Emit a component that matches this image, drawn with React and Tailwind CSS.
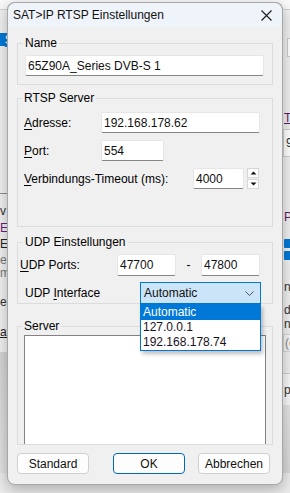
import React from 'react';

const Key = ({ children }) => <span className="underline underline-offset-[2px]">{children}</span>;

const Field = ({ value, className }) => (
    <div className={`h-[21px] bg-white border border-[#e6e6e6] border-b-[#868686] rounded-[2px] flex items-center pl-[2px] text-[#111] ${className}`}>
        {value}
    </div>
);

const Group = ({ title, className, children }) => (
    <fieldset className={`border border-[#dcdcdc] min-w-0 ${className}`}>
        <legend className="ml-[-2px] px-[2px] leading-[16px]">{title}</legend>
        {children}
    </fieldset>
);

const Spinner = () => (
    <div className="ml-[3px] flex flex-col gap-[1px] w-[12px]">
        <div className="h-[10px] bg-white border border-[#d6d6d6] flex items-center justify-center">
            <svg width="7" height="4" viewBox="0 0 7 4"><path d="M0.5 3.5 L3.5 0.5 L6.5 3.5 Z" fill="#111" /></svg>
        </div>
        <div className="h-[10px] bg-white border border-[#d6d6d6] flex items-center justify-center">
            <svg width="7" height="4" viewBox="0 0 7 4"><path d="M0.5 0.5 L3.5 3.5 L6.5 0.5 Z" fill="#111" /></svg>
        </div>
    </div>
);

// bits of the window behind the dialog, only the edges show
const Backdrop = () => (
    <>
        <div className="absolute left-0 top-0 w-[290px] h-[10px] bg-[#f9f9f9] border-b border-[#cfcfcf]" />
        <div className="absolute left-0 top-[33px] w-[40px] h-[14px] bg-[#0078d7] text-white leading-[14px]">
            <span className="ml-[-2px]">_S</span>
        </div>
        <div className="absolute left-0 top-[193px] w-[40px] h-px bg-[#8c8c8c]" />
        <div className="absolute left-0 top-[205px] leading-[13px] text-[#333]">v</div>
        <div className="absolute left-0 top-[222px] leading-[13px] text-[#6a1f7a]">EI</div>
        <div className="absolute left-0 top-[238px] leading-[13px] text-[#222]">EP</div>
        <div className="absolute left-0 top-[255px] leading-[10px] text-[#777]">er</div>
        <div className="absolute left-0 top-[268px] leading-[10px] text-[#777]">m</div>
        <div className="absolute left-0 top-[296px] leading-[13px] text-[#333]">ei</div>
        <div className="absolute left-0 top-[326px] leading-[13px] text-[#222] underline">at</div>
        <div className="absolute left-0 top-[352px] w-[40px] h-[121px] bg-gradient-to-b from-[#d4d4d4] to-[#e2e2e2]" />

        <div className="absolute left-[287px] top-[38px] w-[10px] h-[19px] bg-white border border-[#cccccc]" />
        <div className="absolute left-[284px] top-[112px] leading-[13px] text-[#5a1a6a] underline">T</div>
        <div className="absolute left-[283px] top-[129px] w-[20px] h-[28px] bg-white border border-[#d0d0d0] leading-[26px] pl-[2px] text-[#333]">9</div>
        <div className="absolute left-[284px] top-[211px] leading-[13px] text-[#5a1a6a]">Pl</div>
        <div className="absolute left-[284px] top-[239px] w-[9px] h-[9px] bg-[#0078d7] rounded-[1px]" />
        <div className="absolute left-[284px] top-[251px] w-[9px] h-[9px] bg-[#0078d7] rounded-[1px]" />
        <div className="absolute left-[284px] top-[281px] leading-[13px] text-[#333]">n</div>
        <div className="absolute left-[284px] top-[304px] leading-[13px] text-[#333]">de</div>
        <div className="absolute left-[284px] top-[318px] leading-[13px] text-[#333]">n</div>
        <div className="absolute left-[283px] top-[334px] w-[20px] h-[18px] bg-[#f7f7f7] border border-[#d6d6d6] leading-[16px] pl-[1px] text-[#888]">(c</div>
        <div className="absolute left-[270px] top-[373px] w-[40px] h-[32px] bg-[#f8f8f8] border-t border-[#d0d0d0] leading-[32px] pl-[14px] text-[#333]">pr</div>
        <div className="absolute left-[270px] top-[405px] w-[40px] h-[68px] bg-gradient-to-b from-[#e4e4e4] to-[#d8d8d8]" />
        <div className="absolute left-0 top-[473px] w-[290px] h-[20px] bg-[#ebebeb]" />
    </>
);

export default function App() {
    return (
        <div className="relative w-[290px] h-[493px] overflow-hidden bg-[#f0f0f0] text-[12px] text-black font-['Liberation_Sans',Arial,sans-serif]">
            <Backdrop />

            <div className="absolute left-[7px] top-[2px] w-[276px] h-[483px] flex flex-col bg-[#f0f0f0] border border-[#a8a8a8] rounded-[8px] shadow-[0_4px_14px_rgba(0,0,0,0.28)]">
                <div className="h-[25px] -mt-px -mx-px flex items-center pl-[5px] pr-[10px] bg-[#eef4f9] rounded-t-[8px] border-t border-x border-[#a8a8a8] shrink-0">
                    <span className="text-[12px] text-[#111]">SAT&gt;IP RTSP Einstellungen</span>
                    <svg className="ml-auto" width="11" height="11" viewBox="0 0 11 11">
                        <path d="M0.5 0.5 L10.5 10.5 M10.5 0.5 L0.5 10.5" stroke="#1a1a1a" strokeWidth="1.1" />
                    </svg>
                </div>

                <div className="flex flex-col px-[9px]">
                    <Group title="Name" className="mt-[8px] px-[7px] pt-[4px] pb-[8px]">
                        <Field value="65Z90A_Series DVB-S 1" className="w-[239px]" />
                    </Group>

                    <Group title="RTSP Server" className="mt-[5px] pl-[6px] pt-[6px] pb-[37px]">
                        <div className="flex flex-col gap-[7px]">
                            <div className="flex items-center">
                                <span className="w-[77px]"><Key>A</Key>dresse:</span>
                                <Field value="192.168.178.62" className="w-[159px]" />
                            </div>
                            <div className="flex items-center">
                                <span className="w-[77px]"><Key>P</Key>ort:</span>
                                <Field value="554" className="w-[63px]" />
                            </div>
                            <div className="flex items-center">
                                <span className="w-[169px]"><Key>V</Key>erbindungs-Timeout (ms):</span>
                                <Field value="4000" className="w-[51px]" />
                                <Spinner />
                            </div>
                        </div>
                    </Group>

                    <Group title="UDP Einstellungen" className="mt-[7px] px-[7px] pt-[4px] relative z-10">
                        <div className="flex items-center h-[22px]">
                            <span className="w-[97px] -ml-[5px]"><Key>U</Key>DP Ports:</span>
                            <Field value="47700" className="w-[59px] h-[22px]" />
                            <span className="w-[25px] text-center">-</span>
                            <Field value="47800" className="w-[59px] h-[22px]" />
                        </div>
                        <div className="flex items-center mt-[6px] -mb-px">
                            <span className="w-[115px]">UDP <Key>I</Key>nterface</span>
                            <div className="relative w-[121px] h-[22px] bg-[#cce4f7] border border-[#0078d7] flex items-center pl-[3px] text-[#111]">
                                Automatic
                                <svg className="ml-auto mr-[6px]" width="9" height="5" viewBox="0 0 9 5">
                                    <path d="M0.5 0.5 L4.5 4.5 L8.5 0.5" fill="none" stroke="#555" strokeWidth="1" />
                                </svg>
                                <div className="absolute left-[-1px] top-[21px] w-[121px] bg-white border border-[#0078d7] shadow-[2px_3px_4px_rgba(0,0,0,0.25)] flex flex-col">
                                    <div className="h-[15px] leading-[15px] pl-[2px] bg-[#0078d7] text-white">Automatic</div>
                                    <div className="h-[15px] leading-[15px] pl-[2px] text-[#1a1020]">127.0.0.1</div>
                                    <div className="h-[15px] leading-[15px] pl-[2px] text-[#1a1020]">192.168.178.74</div>
                                </div>
                            </div>
                        </div>
                    </Group>

                    <Group title="Server" className="mt-[14px] px-[6px] pt-[1px]">
                        <div className="h-[109px] bg-white border-x border-t border-[#828282]" />
                    </Group>

                    <div className="flex items-center mt-[8px]">
                        <button className="w-[72px] h-[21px] bg-[#fdfdfd] border border-[#d0d0d0] rounded-[4px] text-[#111]">Standard</button>
                        <button className="ml-[24px] w-[72px] h-[21px] bg-[#fdfdfd] border border-[#0067c0] rounded-[4px] text-[#111]">OK</button>
                        <button className="ml-[13px] w-[72px] h-[21px] bg-[#fdfdfd] border border-[#d0d0d0] rounded-[4px] text-[#111]">Abbrechen</button>
                    </div>
                </div>
            </div>
        </div>
    );
}
